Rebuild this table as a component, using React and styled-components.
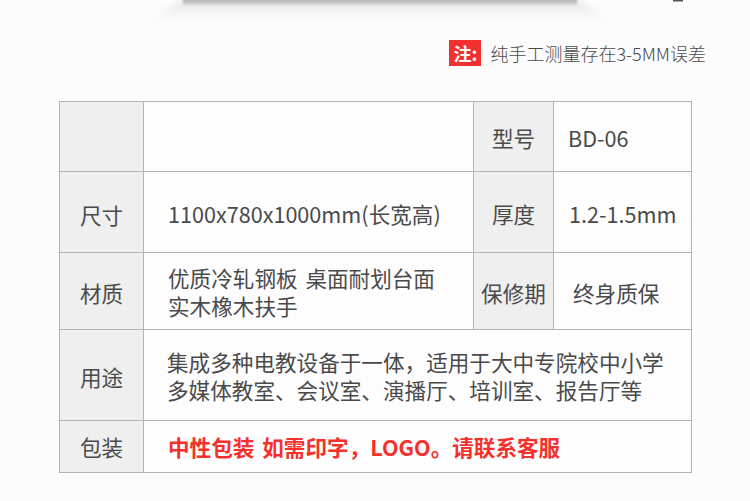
import React from "react";
import styled, { createGlobalStyle } from "styled-components";

const Global = createGlobalStyle`
  html, body { margin: 0; padding: 0; background: #fcfcfc; }
  body { font-family: "Noto Sans CJK SC", "Noto Sans", sans-serif; color: #444; }
`;

const Page = styled.div`
  width: 750px;
  height: 501px;
  display: flex;
  flex-direction: column;
  overflow: hidden;
  background: #fcfcfc;
`;

const TopShade = styled.svg`
  display: block;
  width: 750px;
  height: 36px;
  flex: none;
`;

const NoteRow = styled.div`
  display: flex;
  justify-content: flex-end;
  align-items: center;
  gap: 9px;
  padding: 4px 44px 0 0;
  height: 26px;
`;

const NoteBadge = styled.span`
  width: 32px;
  height: 26px;
  background: #f2302f;
  color: #fff;
  font-weight: 700;
  font-size: 18px;
  line-height: 26px;
  text-align: center;
`;

const NoteText = styled.span`
  font-size: 18px;
  color: #4a4a4a;
  line-height: 26px;
  font-weight: 300;
`;

const Table = styled.div`
  margin: 35px 0 0 59px;
  display: grid;
  grid-template-columns: 84px 330px 80px 138px;
  grid-template-rows: 70px 81px 77px 91px 52px;
  border-top: 1px solid #b3b3b3;
  border-left: 1px solid #b3b3b3;
  width: 632px;
`;

const Cell = styled.div`
  box-sizing: border-box;
  border-right: 1px solid #b3b3b3;
  border-bottom: 1px solid #b3b3b3;
  background: ${(p) => (p.$label ? "#efefef" : "#fdfdfd")};
  grid-column: ${(p) => p.$span || "auto"};
  display: flex;
  align-items: center;
  justify-content: ${(p) => (p.$label ? "center" : "flex-start")};
  padding-left: ${(p) => (p.$label ? 0 : p.$pad ?? 24)}px;
  padding-top: ${(p) => p.$dy ?? 0}px;
  font-size: 21.6px;
  line-height: 28px;
  word-spacing: 3px;
  color: ${(p) => (p.$red ? "#f5302d" : "#4a4a4a")};
  font-weight: ${(p) => (p.$red ? 700 : 400)};
  white-space: nowrap;
`;

const Lines = styled.div`
  display: flex;
  flex-direction: column;
`;

export default function App() {
  return (
    <Page>
      <Global />
      <TopShade viewBox="0 0 750 36">
        <defs>
          <linearGradient id="fall" x1="0" y1="0" x2="0" y2="1">
            <stop offset="0" stopColor="#e2e2e2" />
            <stop offset="1" stopColor="#fcfcfc" stopOpacity="0" />
          </linearGradient>
          <linearGradient id="band" x1="0" y1="0" x2="0" y2="1">
            <stop offset="0" stopColor="#a8a8a8" />
            <stop offset="1" stopColor="#d8d8d8" />
          </linearGradient>
          <filter id="soft" x="-10%" y="-50%" width="120%" height="200%">
            <feGaussianBlur stdDeviation="3" />
          </filter>
          <filter id="soft2" x="-10%" y="-50%" width="120%" height="200%">
            <feGaussianBlur stdDeviation="1" />
          </filter>
        </defs>
        <polygon points="183,0 577,0 625,26 135,26" fill="url(#fall)" filter="url(#soft)" />
        <rect x="183" y="-2" width="394" height="7" fill="url(#band)" filter="url(#soft2)" />
        <rect x="673" y="0" width="10" height="1.5" fill="#555" />
      </TopShade>
      <NoteRow>
        <NoteBadge>注:</NoteBadge>
        <NoteText>纯手工测量存在3-5MM误差</NoteText>
      </NoteRow>
      <Table>
        <Cell $label />
        <Cell />
        <Cell $label $dy={3}>型号</Cell>
        <Cell $pad={14} $dy={3}>BD-06</Cell>

        <Cell $label $dy={6}>尺寸</Cell>
        <Cell $dy={4}>1100x780x1000mm(长宽高)</Cell>
        <Cell $label $dy={4}>厚度</Cell>
        <Cell $pad={15} $dy={4}>1.2-1.5mm</Cell>

        <Cell $label $dy={4}>材质</Cell>
        <Cell $dy={2}>
          <Lines>
            <span>优质冷轧钢板 桌面耐划台面</span>
            <span>实木橡木扶手</span>
          </Lines>
        </Cell>
        <Cell $label $dy={4}>保修期</Cell>
        <Cell $pad={19} $dy={4}>终身质保</Cell>

        <Cell $label $dy={4}>用途</Cell>
        <Cell $span="span 3" $pad={23} $dy={2}>
          <Lines>
            <span>集成多种电教设备于一体，适用于大中专院校中小学</span>
            <span>多媒体教室、会议室、演播厅、培训室、报告厅等</span>
          </Lines>
        </Cell>

        <Cell $label>包装</Cell>
        <Cell $span="span 3" $red>中性包装 如需印字，LOGO。请联系客服</Cell>
      </Table>
    </Page>
  );
}
